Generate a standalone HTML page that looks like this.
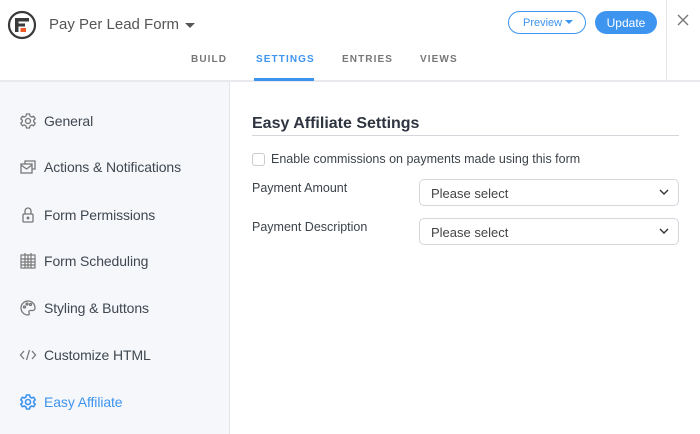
<!DOCTYPE html>
<html><head><style>
*{box-sizing:border-box;margin:0;padding:0}
body{width:700px;height:434px;overflow:hidden;background:#fff;font-family:"Liberation Sans",sans-serif;position:relative;color:#3c434a}
.abs{position:absolute}
.hdr{left:0;top:0;width:700px;height:82px;border-bottom:2px solid #e8e9ec}
.tab{top:54px;font-size:10px;letter-spacing:1.1px;font-weight:bold;color:#777}
.side{left:0;top:82px;width:230px;height:352px;background:#f6f7fb;border-right:1px solid #e3e5ea}
.item{left:44px;font-size:14px;color:#3f4750;letter-spacing:-0.1px}
.ic{left:19px;width:18px;height:18px}
.sel{left:419px;width:260px;height:27px;border:1px solid #d4d7dc;border-radius:5px;font-size:13px;color:#444;padding:6px 11px}
.sel svg{position:absolute;right:9px;top:9px}
.lbl{left:252px;font-size:13px;color:#3c434a}
</style></head><body>
<div class="abs hdr"></div>
<div class="abs" style="left:666px;top:0;width:1px;height:81px;background:#e3e5ea"></div>
<svg class="abs" style="left:7px;top:10px" width="30" height="30" viewBox="0 0 30 30"><circle cx="15" cy="15" r="13" fill="none" stroke="#3a3a3a" stroke-width="2.2"/><rect x="8" y="8" width="14" height="3.5" fill="#3a3a3a"/><rect x="8" y="13.5" width="10" height="3" fill="#3a3a3a"/><rect x="8" y="8" width="3.5" height="14" fill="#3a3a3a"/><rect x="13.5" y="18" width="5.5" height="4" fill="#f05a24"/></svg>
<div class="abs" style="left:49px;top:16px;font-size:15px;color:#555">Pay Per Lead Form</div>
<svg class="abs" style="left:184px;top:22px" width="12" height="7"><path d="M1 1h10L6 6z" fill="#555"/></svg>
<div class="abs tab" style="left:191px">BUILD</div>
<div class="abs tab" style="left:256px;color:#3d95f0">SETTINGS</div>
<div class="abs" style="left:254px;top:78px;width:60px;height:3px;background:#3d95f0"></div>
<div class="abs tab" style="left:342px">ENTRIES</div>
<div class="abs tab" style="left:420px">VIEWS</div>
<div class="abs" style="left:508px;top:11px;width:78px;height:23px;border:1px solid #3d95f0;border-radius:12px;color:#3d95f0;font-size:11px;padding:5px 0 0 14px">Preview</div>
<svg class="abs" style="left:565px;top:20px" width="8" height="5"><path d="M0 0h8L4 4z" fill="#3d95f0"/></svg>
<div class="abs" style="left:595px;top:11px;width:62px;height:23px;background:#3d95f0;border-radius:12px;color:#fff;font-size:12px;text-align:center;padding-top:5px">Update</div>
<svg class="abs" style="left:677px;top:14px" width="12" height="12"><path d="M1 1L11 11M11 1L1 11" stroke="#777" stroke-width="1.4"/></svg>

<div class="abs side"></div>
<svg class="abs ic" style="top:112px" viewBox="0 0 18 18" fill="none" stroke="#777" stroke-width="1.3"><circle cx="9" cy="9" r="2.5"/><path d="M7.5 2h3l.5 2 1.7 1 2-.7 1.5 2.6-1.5 1.4v1.4l1.5 1.4-1.5 2.6-2-.7-1.7 1-.5 2h-3l-.5-2-1.7-1-2 .7L1.8 11.1l1.5-1.4V8.3L1.8 6.9 3.3 4.3l2 .7L7 4z"/></svg>
<div class="abs item" style="top:113px">General</div>
<svg class="abs ic" style="top:158px" viewBox="0 0 18 18" fill="none" stroke="#777" stroke-width="1.3"><rect x="2" y="6" width="11" height="9"/><path d="M2 7l5.5 4 5.5-4M6 6V3h10v8h-3"/></svg>
<div class="abs item" style="top:159px">Actions &amp; Notifications</div>
<svg class="abs ic" style="top:206px" viewBox="0 0 18 18" fill="none" stroke="#777" stroke-width="1.3"><rect x="4" y="8" width="10" height="8" rx="1"/><path d="M6 8V5a3 3 0 0 1 6 0v3"/><circle cx="9" cy="12" r=".8" fill="#777"/></svg>
<div class="abs item" style="top:207px">Form Permissions</div>
<svg class="abs ic" style="top:252px" viewBox="0 0 18 18" fill="none" stroke="#777" stroke-width="1.2"><rect x="2" y="3" width="14" height="13"/><path d="M2 7h14M2 10h14M2 13h14M6 3v13M9 3v13M12 3v13M6 1v3M12 1v3"/></svg>
<div class="abs item" style="top:253px">Form Scheduling</div>
<svg class="abs ic" style="top:299px" viewBox="0 0 18 18" fill="none" stroke="#777" stroke-width="1.3"><path d="M9 2a7 7 0 0 0 0 14c1.5 0 1.5-1.5 1-2.5s0-2 1.5-2H14a2.5 2.5 0 0 0 2-3A7 7 0 0 0 9 2z"/><circle cx="5.5" cy="8" r="1"/><circle cx="8" cy="5" r="1"/><circle cx="11.5" cy="5.5" r="1"/></svg>
<div class="abs item" style="top:300px">Styling &amp; Buttons</div>
<svg class="abs ic" style="top:346px" viewBox="0 0 18 18" fill="none" stroke="#777" stroke-width="1.3"><path d="M5 5L1.5 9 5 13M13 5l3.5 4-3.5 4M10.5 4l-3 10"/></svg>
<div class="abs item" style="top:347px">Customize HTML</div>
<svg class="abs ic" style="top:393px" viewBox="0 0 18 18" fill="none" stroke="#3d95f0" stroke-width="1.6"><circle cx="9" cy="9" r="2.5"/><path d="M7.5 2h3l.5 2 1.7 1 2-.7 1.5 2.6-1.5 1.4v1.4l1.5 1.4-1.5 2.6-2-.7-1.7 1-.5 2h-3l-.5-2-1.7-1-2 .7L1.8 11.1l1.5-1.4V8.3L1.8 6.9 3.3 4.3l2 .7L7 4z"/></svg>
<div class="abs item" style="top:394px;color:#3d95f0">Easy Affiliate</div>

<div class="abs" style="left:252px;top:115px;font-size:16px;font-weight:bold;color:#2f3540">Easy Affiliate Settings</div>
<div class="abs" style="left:252px;top:135px;width:427px;height:1px;background:#d4d7dc"></div>
<div class="abs" style="left:252px;top:153px;width:13px;height:13px;border:1px solid #ccc;border-radius:3px"></div>
<div class="abs" style="left:271px;top:152px;font-size:12.5px">Enable commissions on payments made using this form</div>
<div class="abs lbl" style="top:181px;font-size:12.5px">Payment Amount</div>
<div class="abs sel" style="top:179px">Please select<svg width="10" height="6"><path d="M1 1l4 4 4-4" stroke="#333" stroke-width="1.4" fill="none"/></svg></div>
<div class="abs lbl" style="top:220px;font-size:12.5px">Payment Description</div>
<div class="abs sel" style="top:218px">Please select<svg width="10" height="6"><path d="M1 1l4 4 4-4" stroke="#333" stroke-width="1.4" fill="none"/></svg></div>
</body></html>
